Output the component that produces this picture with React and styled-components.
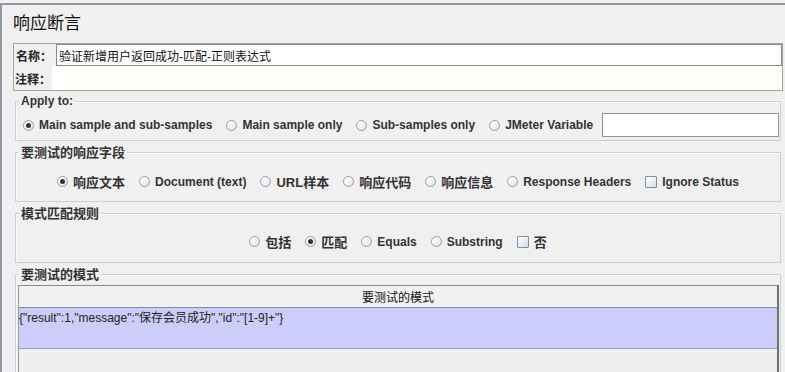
import React from 'react';
import styled, { createGlobalStyle } from 'styled-components';

const GlobalStyle = createGlobalStyle`
  html, body {
    margin: 0;
    padding: 0;
    background: #f0f0f0;
    overflow: hidden;
  }
  body {
    font-family: "Liberation Sans", Arial, "Noto Sans CJK SC", sans-serif;
    color: #222;
  }
`;

const App = () => {
  return (
    <>
      <GlobalStyle />
      <Frame>
        <Title>响应断言</Title>

        <NamePanel>
          <FieldRow $height={22}>
            <FieldLabel $width={42} $indent={2}>名称：</FieldLabel>
            <NameInput>验证新增用户返回成功-匹配-正则表达式</NameInput>
          </FieldRow>
          <FieldRow $height={24}>
            <FieldLabel $width={38} $indent={1}>注释：</FieldLabel>
            <CommentArea />
          </FieldRow>
        </NamePanel>

        <Group $top={3}>
          <Legend>Apply to:</Legend>
          <OptionRow $pad="5px 1px 3px 7px" $gap={14}>
            <Option checked label="Main sample and sub-samples" />
            <Option label="Main sample only" />
            <Option label="Sub-samples only" />
            <Option label="JMeter Variable" />
            <VarInput />
          </OptionRow>
        </Group>

        <Group $top={4}>
          <Legend $cjk>要测试的响应字段</Legend>
          <OptionRow $pad="12px 0 10px 0" $gap={14} $center>
            <Option checked cjk label="响应文本" />
            <Option label="Document (text)" />
            <Option cjk label="URL样本" />
            <Option cjk label="响应代码" />
            <Option cjk label="响应信息" />
            <Option label="Response Headers" />
            <Option box label="Ignore Status" />
          </OptionRow>
        </Group>

        <Group $top={4}>
          <Legend $cjk>模式匹配规则</Legend>
          <OptionRow $pad="11px 0 11px 0" $gap={14} $center>
            <Option cjk label="包括" />
            <Option checked cjk label="匹配" />
            <Option label="Equals" />
            <Option label="Substring" />
            <Option box cjk label="否" />
          </OptionRow>
        </Group>

        <Group $top={4} $grow>
          <Legend $cjk>要测试的模式</Legend>
          <PatternTable>
            <TableHeader>要测试的模式</TableHeader>
            <TableRow>{'{"result":1,"message":"保存会员成功","id":"[1-9]+"}'}</TableRow>
            <TableRest />
          </PatternTable>
        </Group>
      </Frame>
    </>
  );
};

const Option = ({ label, checked, box, cjk }) => (
  <OptionItem>
    {box ? <CheckBox /> : <RadioMark $checked={checked} />}
    <OptionText $cjk={cjk}>{label}</OptionText>
  </OptionItem>
);

const Frame = styled.div`
  box-sizing: border-box;
  width: 785px;
  height: 369px;
  margin-top: 3px;
  border-top: 2px solid #8d98a4;
  border-left: 2px solid #8d98a4;
  display: flex;
  flex-direction: column;
  overflow: hidden;
`;

const Title = styled.div`
  margin: 8px 0 0 11px;
  font-size: 17px;
  line-height: 22px;
  color: #111;
`;

const NamePanel = styled.div`
  margin: 8px 2px 0 11px;
  border: 1px solid #a4a4a4;
  display: flex;
  flex-direction: column;
`;

const FieldRow = styled.div`
  display: flex;
  align-items: stretch;
  height: ${(p) => p.$height}px;
`;

const FieldLabel = styled.div`
  box-sizing: border-box;
  flex: 0 0 ${(p) => p.$width}px;
  padding-left: ${(p) => p.$indent}px;
  display: flex;
  align-items: center;
  font-size: 12px;
  font-weight: 700;
  color: #222;
  white-space: nowrap;
  overflow: hidden;
`;

const NameInput = styled.div`
  flex: 1;
  box-sizing: border-box;
  border: 1px solid #8a8a8a;
  background: #fff;
  padding-left: 2px;
  display: flex;
  align-items: center;
  font-size: 12px;
  color: #111;
`;

const CommentArea = styled.div`
  flex: 1;
  background: #fffffc;
`;

const Group = styled.fieldset`
  margin: ${(p) => p.$top}px 4px 0 13px;
  padding: 0;
  min-width: 0;
  border: 1px solid #c9ced9;
  box-shadow: inset 1px 1px 0 #fbfbfd;
  ${(p) => p.$grow && 'flex: 1; display: flex; flex-direction: column; margin-bottom: -20px;'}
`;

const Legend = styled.legend`
  margin-left: 3px;
  padding: 0 2px;
  font-size: ${(p) => (p.$cjk ? 13 : 12)}px;
  line-height: ${(p) => (p.$cjk ? 15 : 14)}px;
  font-weight: 700;
  color: #333;
`;

const OptionRow = styled.div`
  display: flex;
  align-items: center;
  justify-content: ${(p) => (p.$center ? 'center' : 'flex-start')};
  gap: ${(p) => p.$gap}px;
  padding: ${(p) => p.$pad};
  min-height: 18px;
`;

const OptionItem = styled.label`
  display: flex;
  align-items: center;
  gap: 5px;
`;

const RadioMark = styled.span`
  box-sizing: border-box;
  width: 11px;
  height: 11px;
  border: 1px solid #8e9cb0;
  border-radius: 50%;
  background: linear-gradient(135deg, #ffffff 20%, #dde2ea 100%);
  display: flex;
  align-items: center;
  justify-content: center;

  &::after {
    content: '';
    width: 5px;
    height: 5px;
    border-radius: 50%;
    background: ${(p) => (p.$checked ? '#333' : 'transparent')};
  }
`;

const CheckBox = styled.span`
  box-sizing: border-box;
  width: 12px;
  height: 12px;
  border: 1px solid #7f8ea5;
  border-radius: 1px;
  background: linear-gradient(135deg, #ffffff 10%, #d3d9e5 100%);
`;

const OptionText = styled.span`
  font-size: ${(p) => (p.$cjk ? 13 : 12)}px;
  font-weight: 700;
  color: #333;
  white-space: nowrap;
`;

const VarInput = styled.div`
  box-sizing: border-box;
  width: 180px;
  height: 24px;
  margin-left: -5px;
  border: 1px solid #8a97a6;
  background: #fff;
`;

const PatternTable = styled.div`
  flex: 1;
  margin: 3px 1px 0 2px;
  border-top: 1px solid #8c8c8c;
  border-left: 1px solid #9a9a9a;
  border-right: 2px solid #707070;
  display: flex;
  flex-direction: column;
`;

const TableHeader = styled.div`
  box-sizing: border-box;
  height: 22px;
  border-bottom: 1px solid #858b94;
  background: #f1f1f1;
  display: flex;
  align-items: center;
  justify-content: center;
  font-size: 12px;
  color: #111;
`;

const TableRow = styled.div`
  box-sizing: border-box;
  height: 41px;
  padding: 3px 0 0 0;
  background: #cdcdfb;
  border-bottom: 1px solid #9a9cab;
  font-size: 12px;
  line-height: 14px;
  color: #222;
`;

const TableRest = styled.div`
  flex: 1;
  background: #eef0f0;
`;

export default App;
